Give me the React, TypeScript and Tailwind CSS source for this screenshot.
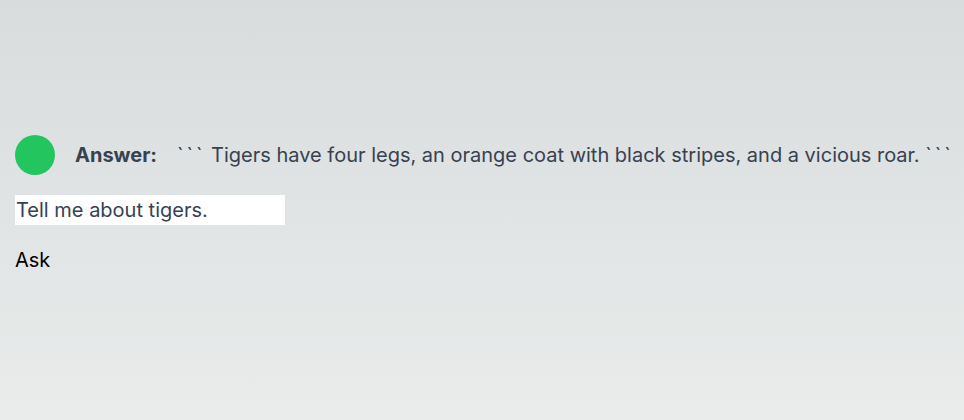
import React from "react";

export default function App() {
  return (
    <div className="w-[964px] h-[420px] bg-gradient-to-b from-[#d8dcdc] to-[#eaecec] px-[15px] pt-[135px] text-[20px] text-[#374151] font-['Inter','Liberation_Sans',sans-serif]">
      <div className="flex items-center h-[40px]">
        <div className="w-[40px] h-[40px] rounded-full bg-[#22c55e] shrink-0" />
        <span className="ml-[20px] font-bold">Answer:</span>
        <span className="ml-[20px] whitespace-nowrap">
          <span className="tracking-[3px]">```</span> Tigers have four legs, an orange coat with black stripes, and a vicious roar.{" "}
          <span className="tracking-[3px]">```</span>
        </span>
      </div>
      <div className="mt-[20px] w-[270px] h-[30px] bg-white flex items-center pl-px">
        Tell me about tigers.
      </div>
      <div className="mt-[20px] text-black leading-[30px]">Ask</div>
    </div>
  );
}
